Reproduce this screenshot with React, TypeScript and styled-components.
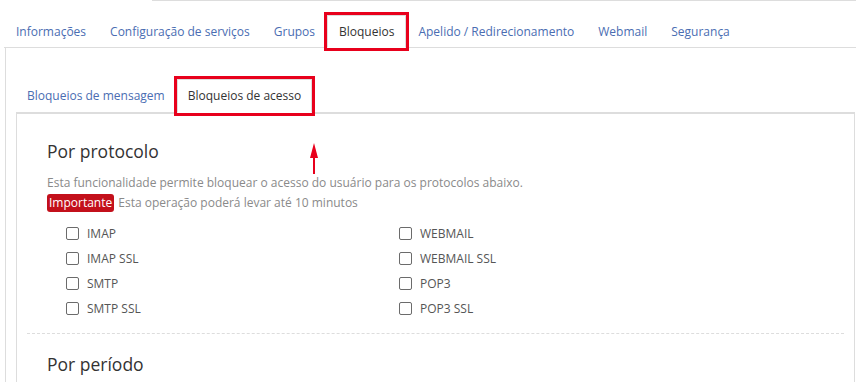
import React from 'react';
import styled, { createGlobalStyle } from 'styled-components';

const GlobalStyle = createGlobalStyle`
  html, body {
    margin: 0;
    padding: 0;
    background: #fff;
    overflow: hidden;
  }
  body {
    font-family: "Open Sans", "Noto Sans", sans-serif;
    font-size: 12px;
    color: #555;
  }
`;

const Page = styled.div`
  position: relative;
  width: 856px;
  height: 382px;
  overflow: hidden;
`;

const TopRule = styled.div`
  height: 1px;
  margin-left: 152px;
  background: #ddd;
`;

const TabBar = styled.ul<{ $inner?: boolean }>`
  list-style: none;
  display: flex;
  margin: ${p => (p.$inner ? '0' : '14px 0 0 4px')};
  padding: 0;
  border-bottom: 1px solid #ddd;
`;

const Tab = styled.li<{ $active?: boolean; $inner?: boolean }>`
  height: ${p => (p.$inner ? '32px' : '31px')};
  line-height: ${p => (p.$inner ? '32px' : '31px')};
  padding: 0 ${p => (p.$inner ? '10px' : '11px')};
  margin: 0 ${p => (p.$inner ? '1px' : '0')} -1px 0;
  border: 1px solid ${p => (p.$active ? '#ddd' : 'transparent')};
  border-bottom-color: ${p => (p.$active ? '#fff' : 'transparent')};
  background: ${p => (p.$active ? '#fff' : 'transparent')};
  color: ${p => (p.$active ? '#333' : '#4a6db2')};
  font-size: 12px;
  white-space: nowrap;
  outline: ${p => (p.$active ? '3px solid #e8001c' : 'none')};
`;

const OuterPanel = styled.div`
  margin-left: 5px;
  border-left: 1px solid #ddd;
  padding: 31px 1px 0 10px;
`;

const InnerPanel = styled.div`
  border: 1px solid #ddd;
  border-bottom: none;
  padding: 25px 10px 0;
  min-height: 300px;
`;

const Section = styled.section`
  padding: 0 20px;
`;

const Heading = styled.h2`
  margin: 0 0 10px;
  font-size: 17.5px;
  font-weight: 500;
  line-height: 24px;
  color: #333;
`;

const Note = styled.p`
  margin: 0;
  font-size: 12px;
  line-height: 20px;
  color: #8a8a8a;
`;

const Badge = styled.span`
  display: inline-block;
  height: 18px;
  line-height: 18px;
  padding: 0 2px;
  margin-right: 4px;
  border-radius: 3px;
  background: #c3101b;
  color: #fff;
  font-size: 12px;
`;

const OptionGrid = styled.div`
  display: grid;
  grid-template-columns: 333px 333px;
  grid-auto-flow: column;
  grid-template-rows: repeat(4, 25px);
  padding: 8px 0 0 19px;
`;

const Option = styled.label`
  display: flex;
  align-items: center;
  gap: 8px;
  font-size: 12px;
  color: #555;
`;

const Box = styled.span`
  width: 11px;
  height: 11px;
  border: 1px solid #6b6b6b;
  border-radius: 2px;
  background: #fff;
`;

const Divider = styled.hr`
  border: none;
  border-top: 1px dashed #ddd;
  margin: 12px 0 18px;
`;

const Arrow = styled.svg`
  position: absolute;
  left: 309px;
  top: 143px;
`;

const protocols = ['IMAP', 'IMAP SSL', 'SMTP', 'SMTP SSL', 'WEBMAIL', 'WEBMAIL SSL', 'POP3', 'POP3 SSL'];

export default function App() {
  return (
    <Page>
      <GlobalStyle />
      <TopRule />
      <TabBar>
        <Tab>Informações</Tab>
        <Tab>Configuração de serviços</Tab>
        <Tab>Grupos</Tab>
        <Tab $active>Bloqueios</Tab>
        <Tab>Apelido / Redirecionamento</Tab>
        <Tab>Webmail</Tab>
        <Tab>Segurança</Tab>
      </TabBar>
      <OuterPanel>
        <TabBar $inner>
          <Tab $inner>Bloqueios de mensagem</Tab>
          <Tab $inner $active>Bloqueios de acesso</Tab>
        </TabBar>
        <InnerPanel>
          <Section>
            <Heading>Por protocolo</Heading>
            <Note>Esta funcionalidade permite bloquear o acesso do usuário para os protocolos abaixo.</Note>
            <Note>
              <Badge>Importante</Badge>
              Esta operação poderá levar até 10 minutos
            </Note>
            <OptionGrid>
              {protocols.map(p => (
                <Option key={p}>
                  <Box />
                  {p}
                </Option>
              ))}
            </OptionGrid>
          </Section>
          <Divider />
          <Section>
            <Heading>Por período</Heading>
          </Section>
        </InnerPanel>
      </OuterPanel>
      <Arrow width="10" height="31" viewBox="0 0 10 31">
        <polygon points="5,0 9,15 1,15" fill="#e8001c" />
        <rect x="4" y="12" width="2" height="19" fill="#e8001c" />
      </Arrow>
    </Page>
  );
}
